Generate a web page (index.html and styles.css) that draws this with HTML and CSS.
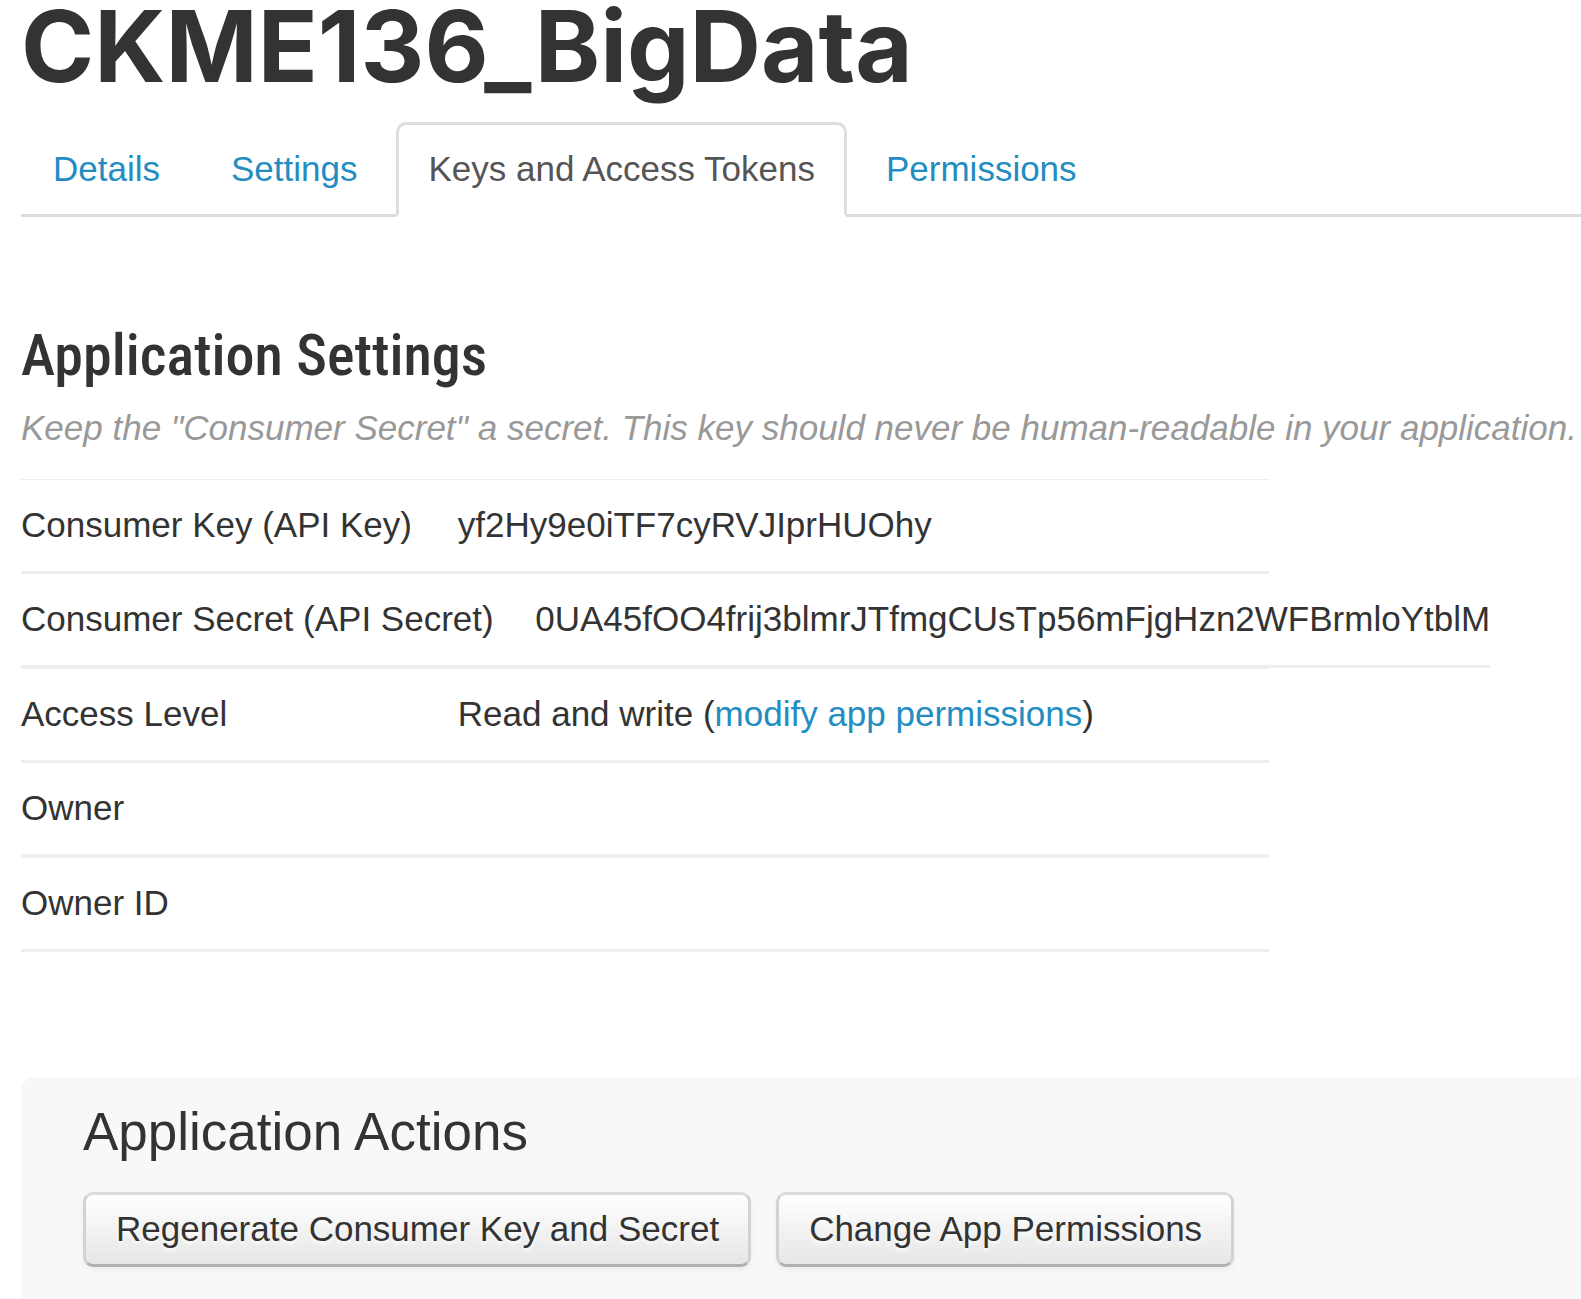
FILE: index.html
```html
<!DOCTYPE html>
<html lang="en">
<head>
<meta charset="utf-8">
<title>CKME136_BigData</title>
<link rel="stylesheet" href="styles.css">
</head>
<body>
<main class="page">
  <h1 class="app-name">CKME136_BigData</h1>
  <nav class="tabs">
    <a class="tab" href="#details">Details</a>
    <a class="tab" href="#settings">Settings</a>
    <a class="tab tab-active" href="#keys" aria-current="page">Keys and Access Tokens</a>
    <a class="tab" href="#permissions">Permissions</a>
  </nav>
  <section class="settings">
    <h2 class="section-title">Application Settings</h2>
    <p class="hint">Keep the "Consumer Secret" a secret. This key should never be human-readable in your application.</p>
    <table class="details">
      <tbody>
        <tr><th scope="row">Consumer Key (API Key)</th><td>yf2Hy9e0iTF7cyRVJIprHUOhy</td></tr>
        <tr><th scope="row">Consumer Secret (API Secret)</th><td>0UA45fOO4frij3blmrJTfmgCUsTp56mFjgHzn2WFBrmloYtblM</td></tr>
        <tr><th scope="row">Access Level</th><td>Read and write (<a href="#permissions">modify app permissions</a>)</td></tr>
        <tr><th scope="row">Owner</th><td></td></tr>
        <tr><th scope="row">Owner ID</th><td></td></tr>
      </tbody>
    </table>
  </section>
  <section class="actions">
    <h3 class="actions-title">Application Actions</h3>
    <div class="buttons">
      <button class="button" type="button">Regenerate Consumer Key and Secret</button>
      <button class="button" type="button">Change App Permissions</button>
    </div>
  </section>
</main>
</body>
</html>
```
FILE: styles.css
```css
* {
  box-sizing: border-box;
}

body {
  margin: 0;
  background: #fff;
  color: #333;
  font: 35px/49px "Liberation Sans", Arial, sans-serif;
}

a {
  color: #238dc1;
  text-decoration: none;
}

.page {
  padding-left: 21px;
}

.app-name {
  margin: 0;
  font: 700 99px/92px Inter, sans-serif;
}

.tabs {
  display: flex;
  gap: 7px;
  margin-top: 30px;
  border-bottom: 3px solid #ddd;
  white-space: nowrap;
}

.tab {
  margin-bottom: -3px;
  padding: 19px 29px 21px;
  border: 3px solid transparent;
  border-radius: 10px 10px 0 0;
}

.tab-active {
  border-color: #ddd #ddd #fff;
  background: #fff;
  color: #555;
}

.settings {
  margin-top: 106px;
}

.section-title {
  margin: 0;
  font: 500 58px/64px "Roboto Condensed", Roboto, sans-serif;
}

.hint {
  margin: 16px 0 27px;
  color: #999;
  font-style: italic;
  white-space: nowrap;
}

.details,
.details tbody {
  display: block;
}

.details tr {
  display: table;
  min-width: 80%;
  border-bottom: 3px solid #eee;
  border-spacing: 0;
  white-space: nowrap;
}

.details tr:nth-child(odd) {
  border-top: 1px solid #eee;
}

.details th,
.details td {
  padding: 20px 0 22px;
  text-align: left;
}

.details th {
  width: 35%;
  font-weight: 400;
}

.actions {
  margin-top: 125px;
  padding: 28px 62px 38px;
  border-radius: 12px 0 0 12px;
  background: #f8f8f8;
}

.actions-title {
  margin: 0;
  font-size: 53px;
  font-weight: 400;
  line-height: 54px;
}

.buttons {
  display: flex;
  gap: 25px;
  margin-top: 33px;
}

.button {
  padding: 9px 29px 11px 30px;
  border: 3px solid;
  border-color: #dcdcdc #d2d2d2 #b0b0b0;
  border-radius: 10px;
  background: linear-gradient(#fff, #e6e6e6);
  box-shadow: 0 3px 5px rgba(0, 0, 0, 0.05);
  color: #333;
  font: inherit;
  text-shadow: 0 3px 3px rgba(255, 255, 255, 0.75);
  white-space: nowrap;
}
```
